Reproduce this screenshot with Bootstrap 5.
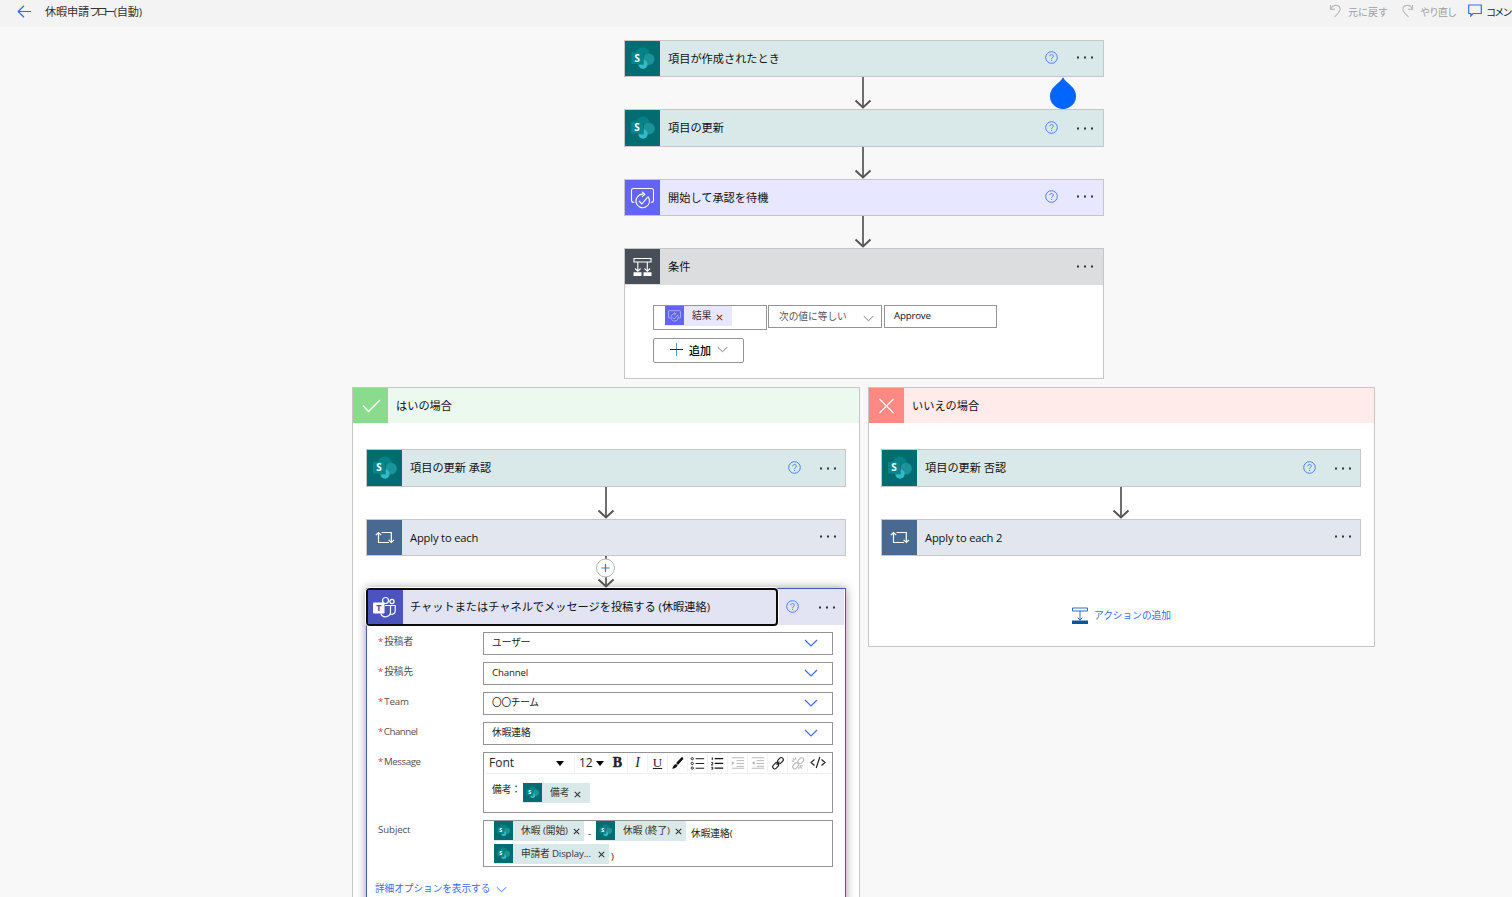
<!DOCTYPE html>
<html lang="ja">
<head>
<meta charset="utf-8">
<title>休暇申請フロー(自動)</title>
<link href="https://cdn.jsdelivr.net/npm/bootstrap@5.3.0/dist/css/bootstrap.min.css" rel="stylesheet">
<style>
body{background:#f8f8f8;font-family:"Open Sans","Noto Sans CJK JP",sans-serif;font-size:11.2px;line-height:16px;color:#111;height:897px;overflow:hidden}
svg{display:block;flex:none}
svg text{font-family:"Open Sans",sans-serif}
.topbar{height:27px;background:#f3f3f3;padding:0 0 3px 17px;color:#333;overflow:hidden;white-space:nowrap}
.topbar .off{color:#a0a0a0;font-size:10px}
.canvas{width:1023px;height:870px;overflow:hidden;margin-left:352px;padding-top:13px}
.spine{width:480px;margin-left:272px}
.step{border:1px solid #c6c6c6;height:37px;background:#e2e6ee;padding-right:10px;white-space:nowrap}
.step.tall{height:38px}
.step .ttl{margin-left:8px}
.lat{letter-spacing:-.17px}
.tile{width:35px;height:100%;flex:none}
.sp{background:#d9e8e8}.sp .tile{background:#036c70}
.ap{background:#e7e7ff}.ap .tile{background:#6264f5}
.loop .tile{background:#486991}
.help{margin-right:19px;margin-top:-2px}
.dots{margin-top:-2px}
.branch .step{padding-right:9px}
.arrow{height:32px}
.cond{border:1px solid #c6c6c6;background:#fff;height:131px}
.cond-h{height:36px;background:#dcdddf;padding-right:10px}
.cond-h .tile{background:#484f58;height:35px;align-self:flex-start}
.cond-h .ttl{margin-left:8px}
.fld{border:1px solid #949494;background:#fff;font-size:9.7px;line-height:14px;white-space:nowrap}
.branch{border:1px solid #c6c6c6;background:#fff}
.branch-h{height:35px}
.branch-b{padding:26px 13px 0}
.yes{width:508px;height:560px}.yes .branch-h{background:#ebf9ee}.yes .branch-h .tile{background:#8bdb8f}
.no{width:507px;height:260px}.no .branch-h{background:#ffebe9}.no .branch-h .tile{background:#fe8982}
.no .branch-b{padding-left:12px}
.teams{border:1px solid #4b53bc;height:340px;background:#fff;box-shadow:0 0 9px rgba(0,0,0,.4)}
.teams-h{height:36px;background:#e2e4f4;margin-right:1px;padding-right:9px}
.focused{width:412px;height:38px;margin:-1px 0 0 -1px;border:2px solid #0c0c0c;border-radius:4px;background:#e2e4f4;white-space:nowrap;flex:none;box-shadow:0 0 0 1px #fff}
.focused .tile{background:#4b53bc}
.frm{padding:7px 12px 0 11px;font-size:9.7px;line-height:14px;color:#505050}
.frm .lab{width:105px;flex:none;padding-top:3px;letter-spacing:-.1px}
.frm .lab i{color:#d64545;font-style:normal;margin-right:1px}
.frm .fld{width:350px;color:#222}
.frm .sel{height:23px;padding:0 14px 2px 8px}
.gap7{margin-bottom:7px}
.chip{height:20px;background:#d9e8e8;color:#333;white-space:nowrap;flex:none}
.chip .ic{width:19px;height:19px;flex:none;background:#036c70;align-self:flex-start}
.tools{height:21px;margin:0 1px;border-bottom:1px solid #eee;font-size:12px;line-height:18px}
.tools .cell{width:20px;height:18px;border-right:1px solid #f2f2f2;flex:none}
.blue{color:#3b6cf6}
.drop{position:absolute;left:1049px;top:77px}
.plusdot{position:absolute;left:-1px;top:2px}
</style>
</head>
<body>
<svg width="0" height="0" class="position-absolute">
<defs>
<symbol id="spi" viewBox="0 0 35 36">
<circle cx="17.800" cy="13.500" r="7" fill="#038387"/><circle cx="24" cy="18.700" r="5.900" fill="#1a9499"/><circle cx="18" cy="24" r="4.700" fill="#2fbcc6"/>
<rect x="7" y="12.500" width="12" height="12" fill="#036065" opacity=".5"/><rect x="6" y="11.700" width="12" height="12" rx=".6" fill="#06868a"/>
<text x="12" y="21.400" font-size="10" font-weight="700" text-anchor="middle" fill="#fff">S</text></symbol>
<symbol id="api" viewBox="0 0 35 35"><g fill="none" stroke="#fff" stroke-width="1.1"><path d="M9.500 22.300H8.500a2 2 0 0 1-2-2V10.500a2 2 0 0 1 2-2h18a2 2 0 0 1 2 2v9.800a2 2 0 0 1-2 2H26"/><path d="M18.500 14.200a6.800 6.800 0 1 0 4.300 2.200M14 21l2.800 3 5.700-6.600M17 11.800l2.800 2.500-2.800 2.500"/></g></symbol>
<symbol id="loopi" viewBox="0 0 35 35"><g fill="none" stroke="#fff" stroke-width="1.200"><path d="M11.500 13v9.500H22M14.500 12.500h9.800v10M8.800 15.200l2.700-2.700 2.700 2.700M21.600 19.800l2.700 2.700 2.700-2.700"/></g></symbol>
<symbol id="q" viewBox="0 0 13 13"><circle cx="6.500" cy="6.500" r="5.800" fill="none" stroke="#4a80fb"/><path d="M4.800 5.200c0-2.300 3.500-2.200 3.500 0 0 1.300-1.700 1.300-1.700 2.600M6.600 8.900v1.100" fill="none" stroke="#4a80fb"/></symbol>
<symbol id="dots" viewBox="0 0 16 3"><path d="M0 .5h2v2H0zM7 .5h2v2H7zM14 .5h2v2h-2z" fill="#333"/></symbol>
<symbol id="arr" viewBox="0 0 18 32"><path d="M9 0v30" stroke="#6e6e6e" stroke-width="2"/><path d="M1.500 23.500L9 30.500l7.500-7" fill="none" stroke="#555" stroke-width="2"/></symbol>
<symbol id="chev" viewBox="0 0 14 8"><path d="M1 1l6 6 6-6" fill="none" stroke="currentColor" stroke-width="1.200"/></symbol>
<symbol id="x" viewBox="0 0 7 7"><path d="M.8.8l5.400 5.400M6.200.8L.8 6.200" stroke="currentColor" stroke-width="1.100"/></symbol>
</defs></svg>

<header class="topbar d-flex align-items-center position-relative">
<svg width="14" height="13" viewBox="0 0 14 13" style="margin-top:-2px"><path d="M7 .8L1.200 6.500 7 12.200M1.200 6.500H14" fill="none" stroke="#2b6cf6" stroke-width="1.200"/></svg>
<span style="margin-left:14px;width:96px;letter-spacing:-.2px">休暇申請<span style="letter-spacing:-3.600px">フロー</span><span style="margin-left:2px">(自動)</span></span>
<div class="d-flex align-items-center off" style="margin-left:1188px">
<svg width="13" height="14" viewBox="0 0 13 14" fill="none" stroke="#bcbcbc" stroke-width="1.200" style="margin-top:-3px"><path d="M1.500 1v4.300H6M1.800 5C4-.5 11.500.8 11 5.800c-.2 2.500-3 4.500-5.500 7.200"/></svg>
<span style="margin-left:6px;width:60px">元に戻す</span>
<svg width="13" height="14" viewBox="0 0 13 14" fill="none" stroke="#bcbcbc" stroke-width="1.200" style="margin-left:-7px;margin-top:-3px"><path d="M11.500 1v4.300H7M11.200 5C9-.5 1.500.8 2 5.800c.2 2.500 3 4.500 5.500 7.200"/></svg>
<span style="margin-left:6px;width:48px;letter-spacing:-1px">やり直し</span>
<svg width="14" height="13" viewBox="0 0 14 13" fill="none" stroke="#3b6cf6" stroke-width="1.200" style="margin-top:-3px"><path d="M.7 1h12.600v8.500H5L2.800 12V9.500H.7z"/></svg>
<span class="text-dark" style="margin-left:4px;letter-spacing:-1.700px">コメン</span>
</div>
</header>

<main class="canvas">
<div class="spine">
<div class="step sp d-flex align-items-center"><div class="tile"><svg width="35" height="35"><use href="#spi"/></svg></div><span class="ttl flex-grow-1">項目が作成されたとき</span><svg class="help" width="13" height="13"><use href="#q"/></svg><svg class="dots" width="16" height="3"><use href="#dots"/></svg></div>
<div class="arrow d-flex justify-content-center pe-1"><svg width="18" height="32" style="margin-left:2px"><use href="#arr"/></svg></div>
<div class="step tall sp d-flex align-items-center"><div class="tile"><svg width="35" height="36"><use href="#spi"/></svg></div><span class="ttl flex-grow-1">項目の更新</span><svg class="help" width="13" height="13"><use href="#q"/></svg><svg class="dots mt-0" width="16" height="3"><use href="#dots"/></svg></div>
<div class="arrow d-flex justify-content-center pe-1"><svg width="18" height="32" style="margin-left:2px"><use href="#arr"/></svg></div>
<div class="step ap d-flex align-items-center"><div class="tile"><svg width="35" height="35"><use href="#api"/></svg></div><span class="ttl flex-grow-1">開始して承認を待機</span><svg class="help" width="13" height="13"><use href="#q"/></svg><svg class="dots" width="16" height="3"><use href="#dots"/></svg></div>
<div class="arrow d-flex justify-content-center pe-1"><svg width="18" height="32" style="margin-left:2px"><use href="#arr"/></svg></div>
<section class="cond">
<div class="cond-h d-flex align-items-center"><div class="tile"><svg width="35" height="35" viewBox="0 0 35 35"><g fill="none" stroke="#fff" stroke-width="1.100"><path d="M9 9.500h17v3.500H9zM12.800 13v9M22.300 13v9M10 19.500l2.800 2.800 2.800-2.800M19.500 19.500l2.800 2.800 2.800-2.800"/></g><path d="M8.500 23.200h8V27h-8zM18.500 23.200h8V27h-8z" fill="#fff"/></svg></div><span class="ttl flex-grow-1">条件</span><svg class="dots" width="16" height="3"><use href="#dots"/></svg></div>
<div style="padding:20px 28px 0">
<div class="d-flex align-items-start">
<div class="fld d-flex" style="width:114px;height:25px;padding-left:11px"><div class="chip d-flex align-items-center" style="background:#e7e7ff"><div class="ic" style="background:#6264f5"><svg width="19" height="19" opacity=".75"><use href="#api"/></svg></div><span style="margin-left:8px">結果</span><svg width="7" height="7" style="margin:3px 9px 0 5px;color:#8a3b12"><use href="#x"/></svg></div></div>
<div class="fld d-flex align-items-center justify-content-between" style="margin-left:1px;width:114px;height:23px;padding:0 7px 0 10px;color:#555"><span>次の値に等しい</span><svg width="11" height="7" style="margin-top:3px;color:#777"><use href="#chev"/></svg></div>
<div class="fld d-flex align-items-center" style="margin-left:2px;width:113px;height:23px;padding:0 0 2px 9px;letter-spacing:-.2px">Approve</div>
</div>
<button class="fld d-flex align-items-center rounded-1 p-0" style="margin-top:8px;width:91px;height:25px;font-size:11px;border-radius:2px!important"><svg width="13" height="13" viewBox="0 0 13 13" style="margin-left:16px;margin-top:-2px"><path d="M6.500 0v13" stroke="#4aa0e0"/><path d="M0 6.500h13" stroke="#222"/></svg><span class="fw-medium" style="margin-left:6px">追加</span><svg width="11" height="7" style="margin-left:6px;margin-top:-2px;color:#777"><use href="#chev"/></svg></button>
</div>
</section>
</div>

<div class="d-flex align-items-start" style="margin-top:8px;gap:8px">
<section class="branch yes flex-shrink-0">
<div class="branch-h d-flex align-items-center"><div class="tile"><svg width="35" height="35" viewBox="0 0 35 35"><path d="M10 17.500l5.500 6L27 12" fill="none" stroke="#fff" stroke-width="1.300"/></svg></div><span style="margin-left:8px">はいの場合</span></div>
<div class="branch-b">
<div class="step tall sp d-flex align-items-center"><div class="tile"><svg width="35" height="36"><use href="#spi"/></svg></div><span class="ttl flex-grow-1">項目の更新 承認</span><svg class="help" width="13" height="13"><use href="#q"/></svg><svg class="dots mt-0" width="16" height="3"><use href="#dots"/></svg></div>
<div class="arrow d-flex justify-content-center"><svg width="18" height="32"><use href="#arr"/></svg></div>
<div class="step loop d-flex align-items-center"><div class="tile"><svg width="35" height="35"><use href="#loopi"/></svg></div><span class="ttl lat flex-grow-1">Apply to each</span><svg class="dots" width="16" height="3"><use href="#dots"/></svg></div>
<div class="arrow d-flex justify-content-center"><div class="position-relative"><svg width="18" height="32"><use href="#arr"/></svg><svg class="plusdot" width="20" height="20" viewBox="0 0 20 20"><circle cx="9.500" cy="10" r="9" fill="#fff" stroke="#b5b5b5"/><path d="M9.500 6v8M5.500 10h8" stroke="#2f7fd6" stroke-width="1.200"/></svg></div></div>
<div class="teams">
<div class="teams-h d-flex align-items-center">
<div class="focused d-flex align-items-center align-self-start"><div class="tile"><svg width="35" height="34" viewBox="0 0 35 34"><g fill="none" stroke="#fff" stroke-width="1.200"><circle cx="17.500" cy="10.500" r="3"/><circle cx="24" cy="11.500" r="2.100"/><path d="M17 15.500h5.500v6.300a5 5 0 0 1-9.700 1.700M22.500 15.500h4.700v5.200c0 3-2.500 4.200-5 3.300"/></g><rect x="5" y="12.500" width="11.500" height="11" rx="1" fill="#fff"/><text x="10.800" y="21.300" font-size="9" font-weight="700" text-anchor="middle" fill="#4b53bc">T</text></svg></div><span style="margin-left:7px">チャットまたはチャネルでメッセージを投稿する (休暇連絡)</span></div>
<span class="flex-grow-1"></span><svg class="help" width="13" height="13" style="margin-right:20px"><use href="#q"/></svg><svg class="dots mt-0" width="16" height="3"><use href="#dots"/></svg>
</div>
<div class="frm">
<div class="d-flex gap7"><div class="lab"><i>*</i>投稿者</div><div class="fld sel d-flex align-items-center justify-content-between"><span>ユーザー</span><svg class="blue" width="14" height="8"><use href="#chev"/></svg></div></div>
<div class="d-flex gap7"><div class="lab"><i>*</i>投稿先</div><div class="fld sel d-flex align-items-center justify-content-between"><span class="lat">Channel</span><svg class="blue" width="14" height="8"><use href="#chev"/></svg></div></div>
<div class="d-flex gap7"><div class="lab"><i>*</i>Team</div><div class="fld sel d-flex align-items-center justify-content-between"><span style="letter-spacing:-.3px">〇〇チーム</span><svg class="blue" width="14" height="8"><use href="#chev"/></svg></div></div>
<div class="d-flex gap7"><div class="lab" style="letter-spacing:-.5px"><i>*</i>Channel</div><div class="fld sel d-flex align-items-center justify-content-between"><span>休暇連絡</span><svg class="blue" width="14" height="8"><use href="#chev"/></svg></div></div>
<div class="d-flex gap7"><div class="lab" style="letter-spacing:-.4px"><i>*</i>Message</div>
<div class="fld" style="height:61px">
<div class="tools d-flex align-items-center">
<div class="d-flex align-items-center justify-content-between" style="width:90px;padding:0 10px 0 4px;border-right:1px solid #f2f2f2"><span>Font</span><svg width="8" height="5"><path d="M0 0h8L4 5z"/></svg></div>
<div class="d-flex align-items-center justify-content-between" style="width:33px;padding:0 4px"><span>12</span><svg width="8" height="5"><path d="M0 0h8L4 5z"/></svg></div>
<div class="cell text-center fw-bold" style="font-family:'Liberation Serif',serif;font-size:14px;-webkit-text-stroke:.4px">B</div>
<div class="cell text-center fst-italic" style="font-family:'Liberation Serif',serif;font-size:14px">I</div>
<div class="cell text-center text-decoration-underline" style="font-family:'Liberation Serif',serif;font-size:13px">U</div>
<svg class="cell" viewBox="0 0 20 18"><path d="M4.500 15c1-3 2-4.500 4-5l1.500 1.500c-1 2.500-3 3-5.500 3.500zM8.500 9L14 3.300c1.200-1 2.700.3 1.800 1.700L10.500 11z" fill="#111"/></svg>
<svg class="cell" viewBox="0 0 20 18" fill="none" stroke="#111"><path d="M8 4.500h9M8 9.500h9M8 14.500h9"/><g stroke-width=".9"><circle cx="4.500" cy="4.500" r="1.200"/><circle cx="4.500" cy="9.500" r="1.200"/><circle cx="4.500" cy="14.300" r="1.200"/></g></svg>
<svg class="cell" viewBox="0 0 20 18" fill="none" stroke="#111"><path d="M7 4.500h9M7 9.500h9M7 14.500h9" stroke-width="1.300"/><path d="M4.500 3v3M3.500 8.500h1.500v1l-1.500 1.500h2M3.500 13.500h1.500v2H3.500"/></svg>
<svg class="cell" viewBox="0 0 20 18" fill="none" stroke="#b5b5b5"><path d="M4 3.500h13M9 6.500h8M9 9.500h8M9 12.500h8M4 14.500h13"/><path d="M4 7l3 2-3 2z" fill="#b5b5b5" stroke="none"/></svg>
<svg class="cell" viewBox="0 0 20 18" fill="none" stroke="#b5b5b5"><path d="M4 3.500h13M9 6.500h8M9 9.500h8M9 12.500h8M4 14.500h13"/><path d="M7 7L4 9l3 2z" fill="#b5b5b5" stroke="none"/></svg>
<svg class="cell" viewBox="0 0 20 18" fill="none" stroke="#222" stroke-width="1.200"><rect x="-3.500" y="-2.200" width="7" height="4.400" rx="2.200" transform="translate(13 6.500) rotate(-48)"/><rect x="-3.500" y="-2.200" width="7" height="4.400" rx="2.200" transform="translate(8 12) rotate(-48)"/><path d="M9 11l3-3.500"/></svg>
<svg class="cell" viewBox="0 0 20 18" fill="none" stroke="#bbb" stroke-width="1.200"><rect x="-3.500" y="-2.200" width="7" height="4.400" rx="2.200" transform="translate(13.500 6.500) rotate(-48)"/><rect x="-3.500" y="-2.200" width="7" height="4.400" rx="2.200" transform="translate(8 12) rotate(-48)"/><path d="M5 4l2 2M8 3v2.500M4 7h2.500M12.500 12h3M12.500 12.500l2 2.500M11.500 13v2.500"/></svg>
<svg width="20" height="18" viewBox="0 0 20 18" fill="none" stroke="#222" stroke-width="1.200"><path d="M6.500 5.500L3 8.500l3.500 3M13.500 5.500l3.500 3-3.500 3M11.800 3L8.200 14"/></svg>
</div>
<div class="d-flex align-items-start" style="padding:9px 0 0 8px"><span style="width:31px">備考：</span><div class="chip d-flex align-items-center"><div class="ic"><svg width="19" height="19"><use href="#spi"/></svg></div><span style="margin-left:8px">備考</span><svg width="7" height="7" style="margin:3px 9px 0 5px"><use href="#x"/></svg></div></div>
</div></div>
<div class="d-flex"><div class="lab">Subject</div>
<div class="fld" style="height:47px;padding-left:10px">
<div class="d-flex" style="height:23px">
<div class="chip d-flex align-items-center"><div class="ic"><svg width="19" height="19"><use href="#spi"/></svg></div><span style="margin-left:8px;width:48px">休暇 (開始)</span><svg width="7" height="7" style="margin:1px 4px 0 4px"><use href="#x"/></svg></div><span style="width:12px;padding:6px 0 0 4px">-</span>
<div class="chip d-flex align-items-center"><div class="ic"><svg width="19" height="19"><use href="#spi"/></svg></div><span style="margin-left:8px;width:48px">休暇 (終了)</span><svg width="7" height="7" style="margin:1px 4px 0 4px"><use href="#x"/></svg></div><span style="padding:6px 0 0 5px">休暇連絡(</span>
</div>
<div class="d-flex"><div class="chip d-flex align-items-center"><div class="ic"><svg width="19" height="19"><use href="#spi"/></svg></div><span style="margin-left:8px;width:70px;letter-spacing:-.15px">申請者 Display...</span><svg width="7" height="7" style="margin:1px 4px 0 7px"><use href="#x"/></svg></div><span style="padding:6px 0 0 2px">)</span></div>
</div></div>
<div class="blue d-flex align-items-center" style="margin:14px 0 0 -3px;padding-top:1px"><span style="letter-spacing:-.08px">詳細オプションを表示する</span><svg width="11" height="7" style="margin-left:6px"><use href="#chev"/></svg></div>
</div>
</div>
</div>
</section>

<section class="branch no flex-shrink-0">
<div class="branch-h d-flex align-items-center"><div class="tile"><svg width="35" height="35" viewBox="0 0 35 35"><path d="M10.500 11l14 14M24.500 11l-14 14" stroke="#fff" stroke-width="1.100"/></svg></div><span style="margin-left:8px">いいえの場合</span></div>
<div class="branch-b">
<div class="step tall sp d-flex align-items-center"><div class="tile"><svg width="35" height="36"><use href="#spi"/></svg></div><span class="ttl flex-grow-1">項目の更新 否認</span><svg class="help" width="13" height="13"><use href="#q"/></svg><svg class="dots mt-0" width="16" height="3"><use href="#dots"/></svg></div>
<div class="arrow d-flex justify-content-center"><svg width="18" height="32"><use href="#arr"/></svg></div>
<div class="step loop d-flex align-items-center"><div class="tile"><svg width="35" height="35"><use href="#loopi"/></svg></div><span class="ttl lat flex-grow-1">Apply to each 2</span><svg class="dots" width="16" height="3"><use href="#dots"/></svg></div>
<div class="blue d-flex justify-content-center align-items-center" style="margin-top:51px;padding-left:1px;font-size:9.700px"><svg width="16" height="17" viewBox="0 0 16 17"><path d="M.5 1h15v3H.5zM8 4v9M5.500 10.500L8 13l2.500-2.500" fill="none" stroke="#2c6cb5"/><path d="M0 13.500h16V17H0z" fill="#0a54a5"/></svg><span style="margin-left:6px">アクションの追加</span></div>
</div>
</section>
</div>
</main>
<svg class="drop" width="28" height="32" viewBox="0 0 28 32"><path d="M14 .3c1.500 3.200 5 5.700 8.500 8.900a13 13 0 1 1-17 0C9 6 12.500 3.500 14 .3z" fill="#0066ff"/></svg>
<script src="https://cdn.jsdelivr.net/npm/bootstrap@5.3.0/dist/js/bootstrap.bundle.min.js"></script>
</body>
</html>
